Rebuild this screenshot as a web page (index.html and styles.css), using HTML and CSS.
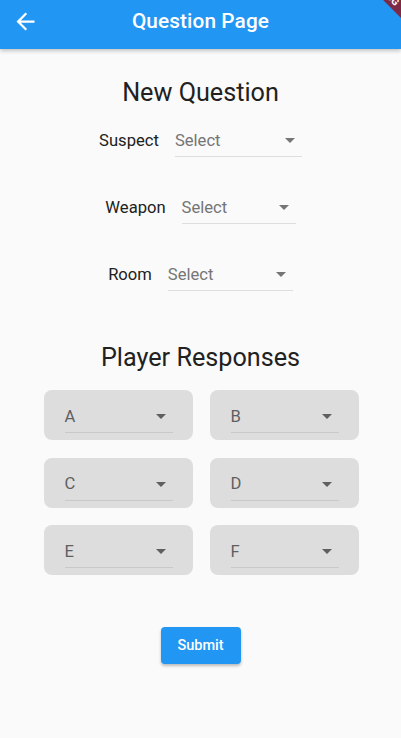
FILE: index.html
```html
<!DOCTYPE html>
<html lang="en">
<head>
<meta charset="utf-8">
<title>Question Page</title>
<link rel="stylesheet" href="styles.css">
</head>
<body>
<header class="appbar">
  <button class="back" aria-label="Back">
    <svg viewBox="0 0 24 24" width="27" height="27"><path fill="#fff" d="M20 11H7.83l5.59-5.59L12 4l-8 8 8 8 1.41-1.41L7.83 13H20v-2z"/></svg>
  </button>
  <h1 class="title">Question Page</h1>
  <span class="spacer"></span>
  <div class="debug"><span>DEBUG</span></div>
</header>
<main class="page">
  <h2 class="heading">New Question</h2>
  <div class="fields">
    <div class="field-row">
      <span class="label">Suspect</span>
      <div class="dropdown w-suspect"><span class="value hint">Select</span><span class="caret"></span></div>
    </div>
    <div class="field-row">
      <span class="label">Weapon</span>
      <div class="dropdown w-weapon"><span class="value hint">Select</span><span class="caret"></span></div>
    </div>
    <div class="field-row">
      <span class="label">Room</span>
      <div class="dropdown w-room"><span class="value hint">Select</span><span class="caret"></span></div>
    </div>
  </div>
  <h2 class="heading responses-heading">Player Responses</h2>
  <div class="grid">
    <div class="card"><div class="dropdown card-dd"><span class="value">A</span><span class="caret dark"></span></div></div>
    <div class="card"><div class="dropdown card-dd"><span class="value">B</span><span class="caret dark"></span></div></div>
    <div class="card"><div class="dropdown card-dd"><span class="value">C</span><span class="caret dark"></span></div></div>
    <div class="card"><div class="dropdown card-dd"><span class="value">D</span><span class="caret dark"></span></div></div>
    <div class="card"><div class="dropdown card-dd"><span class="value">E</span><span class="caret dark"></span></div></div>
    <div class="card"><div class="dropdown card-dd"><span class="value">F</span><span class="caret dark"></span></div></div>
  </div>
  <div class="actions">
    <button class="submit">Submit</button>
  </div>
</main>
</body>
</html>
```
FILE: styles.css
```css
* { box-sizing: border-box; }
html, body {
  margin: 0;
  padding: 0;
  background: #fafafa;
  font-family: Roboto, "Noto Sans", "Liberation Sans", sans-serif;
  color: #212121;
}
body { width: 401px; height: 738px; overflow: hidden; }

.appbar {
  position: relative;
  height: 49px;
  padding-bottom: 7px;
  background: #2196f3;
  display: grid;
  grid-template-columns: 56px 1fr 56px;
  align-items: center;
  box-shadow: 0 2px 4px rgba(0,0,0,0.22);
  overflow: hidden;
  z-index: 2;
}
.back {
  border: 0;
  background: none;
  padding: 0;
  margin-left: 12px;
  width: 27px;
  height: 27px;
  display: flex;
}
.title {
  margin: 0;
  text-align: center;
  color: #fff;
  font-size: 20.8px;
  font-weight: 500;
  letter-spacing: 0.1px;
  line-height: 26px;
}
.debug {
  position: absolute;
  top: -14px;
  right: -30px;
  width: 90px;
  height: 14px;
  background: #7e2a47;
  transform: rotate(45deg);
  color: #fff;
  font-size: 10px;
  font-weight: 700;
  line-height: 14px;
  text-align: center;
}

.page {
  padding-top: 30px;
  display: flex;
  flex-direction: column;
  align-items: center;
}
.heading {
  margin: 0;
  font-size: 25.2px;
  font-weight: 400;
  line-height: 28px;
  color: #212121;
}
.fields {
  margin-top: 17px;
  display: flex;
  flex-direction: column;
  gap: 34px;
}
.field-row {
  display: flex;
  justify-content: center;
  align-items: center;
  gap: 16px;
}
.label {
  font-size: 16.6px;
  color: #212121;
}
.dropdown {
  height: 33px;
  border-bottom: 1px solid #dedede;
  display: flex;
  align-items: center;
  justify-content: space-between;
}
.value {
  font-size: 16.6px;
  color: #5f5f5f;
}
.value.hint { color: #757575; }
.caret {
  width: 24px;
  height: 24px;
  position: relative;
  flex: none;
}
.caret::after {
  content: "";
  position: absolute;
  left: 7px;
  top: 10px;
  border-left: 5px solid transparent;
  border-right: 5px solid transparent;
  border-top: 5px solid #757575;
}
.caret.dark::after { border-top-color: #5f5f5f; }
.w-suspect { width: 127px; }
.w-weapon { width: 114px; }
.w-room { width: 125px; }

.responses-heading { margin-top: 53px; }
.grid {
  margin-top: 18px;
  margin-left: 2px;
  display: grid;
  grid-template-columns: 149px 149px;
  column-gap: 17px;
  row-gap: 17.5px;
}
.card {
  height: 50px;
  background: #dddddd;
  border-radius: 8px;
  padding-top: 10px;
  display: flex;
  justify-content: center;
}
.card-dd {
  width: 108px;
  height: 33px;
  border-bottom-color: #c9c9c9;
}
.actions { margin-top: 52px; }
.submit {
  width: 80px;
  height: 37px;
  border: 0;
  border-radius: 4px;
  background: #2196f3;
  color: #fff;
  font-family: Roboto, "Noto Sans", sans-serif;
  font-size: 14.5px;
  font-weight: 500;
  box-shadow: 0 2px 3px rgba(0,0,0,0.25);
}
```
